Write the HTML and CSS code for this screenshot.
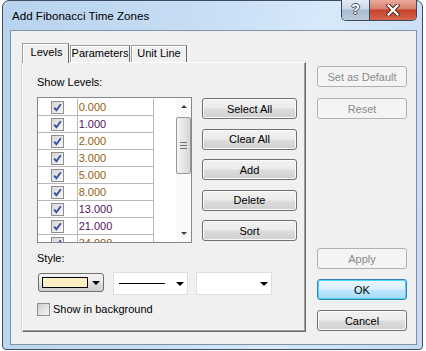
FILE: index.html
```html
<!DOCTYPE html>
<html>
   <head>
      <title>Add Fibonacci Time Zones</title>
      <meta charset="utf-8">
      <link rel="stylesheet" href="styles.css">
   </head>
   <body>
      <div class="window">
         <div class="titlebar">
            <span class="title">Add Fibonacci Time Zones</span>
            <div class="caption-btns">
               <span class="cap-help">?</span>
               <span class="cap-close">
                  <svg width="14" height="12" viewBox="0 0 14 12">
                     <path d="M2.5 1.5 L11.5 10.5 M11.5 1.5 L2.5 10.5" stroke="#5a2a22" stroke-width="4.2" stroke-linecap="square" fill="none"/>
                     <path d="M2.5 1.5 L11.5 10.5 M11.5 1.5 L2.5 10.5" stroke="#ffffff" stroke-width="2.2" stroke-linecap="square" fill="none"/>
                  </svg>
               </span>
            </div>
         </div>

         <div class="client">
            <div class="tabctl">
               <div class="tabs">
                  <span class="tab active">Levels</span>
                  <span class="tab">Parameters</span>
                  <span class="tab">Unit Line</span>
               </div>
               <div class="panel">
                  <div class="lbl">Show Levels:</div>
                  <div class="levels-row">
                     <div class="list">
                        <div class="rows" id="rows"></div>
                        <div class="gap-col"></div>
                        <div class="vscroll">
                           <div class="sb-btn"><span class="arr-up"></span></div>
                           <div class="thumb"><span class="grip"></span></div>
                           <div class="sb-fill"></div>
                           <div class="sb-btn"><span class="arr-down"></span></div>
                        </div>
                     </div>
                     <div class="list-btns">
                        <button class="btn">Select All</button>
                        <button class="btn">Clear All</button>
                        <button class="btn">Add</button>
                        <button class="btn">Delete</button>
                        <button class="btn">Sort</button>
                     </div>
                  </div>

                  <div class="lbl style-lbl">Style:</div>
                  <div class="style-row">
                     <div class="colorpick">
                        <span class="swatch"></span>
                        <span class="arr-down dark"></span>
                     </div>
                     <div class="combo">
                        <span class="line-sample"></span>
                        <span class="arr-down dark"></span>
                     </div>
                     <div class="combo wide">
                        <span class="arr-down dark"></span>
                     </div>
                  </div>

                  <div class="chk-row">
                     <span class="cb empty"></span>
                     <span>Show in background</span>
                  </div>
               </div>
            </div>

            <div class="side">
               <button class="btn off">Set as Default</button>
               <button class="btn off">Reset</button>
               <div class="side-fill"></div>
               <button class="btn off">Apply</button>
               <button class="btn default">OK</button>
               <button class="btn">Cancel</button>
            </div>
         </div>
      </div>

      <script>
         // fibonacci levels shown in the list, with their line colours
         let levels = [
            ["0.000", "gold"], ["1.000", "plum"], ["2.000", "gold"],
            ["3.000", "gold"], ["5.000", "gold"], ["8.000", "gold"],
            ["13.000", "plum"], ["21.000", "plum"], ["34.000", "gold"]
         ];

         let check = '<svg width="11" height="11" viewBox="0 0 11 11">' +
            '<path d="M2.2 5.6 L4.4 8.2 L8.8 2.2" stroke="#3550a0" stroke-width="1.9" fill="none"/></svg>';

         let html = "";
         for (let i = 0; i < levels.length; i++) {
            html += '<div class="row"><span class="c-chk"><span class="cb">' + check +
               '</span></span><span class="c-val ' + levels[i][1] + '">' + levels[i][0] + '</span></div>';
         }
         document.getElementById("rows").innerHTML = html;
      </script>
   </body>
</html>
```

FILE: styles.css
```css
body {
   margin: 0;
   background: #ffffff;
   font-family: "Liberation Sans", Arial, sans-serif;
   font-size: 11px;
   color: #000000;
}

button {
   font-family: inherit;
   font-size: 11px;
   font-weight: normal;
   color: #000000;
   padding: 0;
}

/* window frame */

.window {
   margin-left: 2px;
   width: 421px;
   height: 350px;
   box-sizing: border-box;
   border: 1px solid #3f4c5d;
   border-radius: 7px 7px 4px 4px;
   padding: 0 5px 4px 7px;
   background: linear-gradient(100deg, #b8d3ee 0%, #c6ddf4 40%, #d8e9fa 68%, #c4dbf2 100%);
   display: flex;
   flex-direction: column;
}

.titlebar {
   height: 29px;
   display: flex;
   align-items: flex-start;
}

.title {
   padding: 8px 0 0 2px;
   line-height: 13px;
   font-size: 11.6px;
}

.caption-btns {
   margin-left: auto;
   margin-top: -1px;
   height: 20px;
   display: flex;
   border: 1px solid #3a4859;
   border-top: 0;
   border-radius: 0 0 5px 5px;
   overflow: hidden;
}

.cap-help {
   width: 27px;
   border-right: 1px solid #3a4859;
   background: linear-gradient(#e2ebf4 0%, #cbd8e6 45%, #a9bbd0 50%, #bccbdb 100%);
   color: #ffffff;
   font-weight: bold;
   font-size: 14px;
   line-height: 19px;
   text-align: center;
   text-shadow: -1px 0 #47566b, 1px 0 #47566b, 0 -1px #47566b, 0 1px #47566b;
}

.cap-close {
   width: 46px;
   display: flex;
   align-items: center;
   justify-content: center;
   background: linear-gradient(#e9a99a 0%, #d7806b 45%, #c4412a 50%, #d4664c 100%);
}

/* client area */

.client {
   flex: 1;
   border: 1px solid #7f92a8;
   background: #f0f0f0;
   display: flex;
   padding: 12px 9px 12px 11px;
}

.tabctl {
   width: 284px;
   display: flex;
   flex-direction: column;
}

.tabs {
   height: 19px;
   display: flex;
   align-items: flex-end;
}

.tab {
   height: 17px;
   box-sizing: border-box;
   border: 1px solid #a0a0a0;
   border-bottom: 0;
   border-right-color: #696969;
   box-shadow: inset 1px 1px 0 #ffffff;
   background: #f0f0f0;
   text-align: center;
   line-height: 15px;
   margin-left: 1px;
   width: 60px;
}

.tab:last-child {
   width: 56px;
}

.tab.active {
   margin-left: 0;
   width: 47px;
   height: 20px;
   margin-bottom: -1px;
   line-height: 16px;
   padding-left: 2px;
   position: relative;
   z-index: 1;
}

.panel {
   flex: 1;
   border: 1px solid;
   border-color: #ffffff #696969 #696969 #ffffff;
   box-shadow: inset -1px -1px 0 #a0a0a0, -1px 0 0 #d8d8d8;
   padding: 13px 0 0 14px;
}

.lbl {
   line-height: 13px;
}

.levels-row {
   display: flex;
   margin-top: 8px;
}

/* levels list */

.list {
   width: 155px;
   height: 146px;
   box-sizing: border-box;
   border: 1px solid #828790;
   background: #ffffff;
   display: flex;
   overflow: hidden;
}

.rows {
   width: 116px;
   padding-top: 1px;
   overflow: hidden;
}

.row {
   display: flex;
   height: 17px;
   box-sizing: border-box;
   border-bottom: 1px solid #b9b9b9;
}

.c-chk {
   width: 39px;
   border-right: 1px solid #b9b9b9;
   display: flex;
   align-items: center;
   justify-content: center;
}

.c-val {
   width: 75px;
   border-right: 1px solid #b9b9b9;
   padding-left: 1px;
   line-height: 16px;
}

.gold {
   color: #95600f;
}

.plum {
   color: #55125e;
}

.gap-col {
   width: 22px;
}

.cb {
   width: 13px;
   height: 13px;
   box-sizing: border-box;
   border: 1px solid #8f8f8f;
   background: linear-gradient(135deg, #d6d6d6, #f8f8f8);
   display: flex;
   align-items: center;
   justify-content: center;
}

.cb svg {
   display: block;
}

.vscroll {
   width: 15px;
   display: flex;
   flex-direction: column;
   background: #fafafa;
}

.sb-btn {
   height: 17px;
   display: flex;
   align-items: center;
   justify-content: center;
}

.thumb {
   height: 57px;
   margin-top: 2px;
   box-sizing: border-box;
   border: 1px solid #979797;
   border-radius: 2px;
   background: linear-gradient(to right, #f4f4f4, #e6e6e6 50%, #d6d6d6);
   display: flex;
   align-items: center;
   justify-content: center;
}

.grip {
   width: 7px;
   height: 5px;
   border-top: 1px solid #707070;
   border-bottom: 1px solid #707070;
   background: linear-gradient(transparent 2px, #707070 2px, #707070 3px, transparent 3px);
}

.sb-fill {
   flex: 1;
}

.arr-up {
   width: 0;
   height: 0;
   border-left: 3px solid transparent;
   border-right: 3px solid transparent;
   border-bottom: 3px solid #404040;
}

.arr-down {
   width: 0;
   height: 0;
   border-left: 3px solid transparent;
   border-right: 3px solid transparent;
   border-top: 3px solid #404040;
}

.arr-down.dark {
   border-left-width: 4px;
   border-right-width: 4px;
   border-top: 4px solid #000000;
}

/* push buttons */

.btn {
   height: 21px;
   box-sizing: border-box;
   border: 1px solid #707070;
   border-radius: 3px;
   background: linear-gradient(#f2f2f2 0%, #ebebeb 48%, #dddddd 52%, #cfcfcf 100%);
   box-shadow: inset 0 0 0 1px #fbfbfb;
}

.btn.off {
   border-color: #adb2b5;
   background: #f4f4f4;
   color: #8a8a8a;
   box-shadow: none;
}

.btn.default {
   border-color: #3c7fb1;
   background: linear-gradient(#eaf6fd 0%, #d9f0fc 48%, #bee6fd 52%, #a7d9f5 100%);
   box-shadow: inset 0 0 0 1px #48d7fb;
}

.list-btns {
   margin-left: 10px;
   margin-top: 1px;
   display: flex;
   flex-direction: column;
   gap: 9.5px;
}

.list-btns .btn {
   width: 95px;
}

.side {
   width: 90px;
   margin-left: 11px;
   margin-top: 23px;
   margin-bottom: 1px;
   display: flex;
   flex-direction: column;
   gap: 10px;
}

.side .btn:nth-child(2) {
   margin-top: 1px;
}

.side-fill {
   flex: 1;
}

/* style row */

.style-lbl {
   margin-top: 9px;
}

.style-row {
   display: flex;
   align-items: flex-start;
   margin-top: 7px;
}

.colorpick {
   width: 66px;
   height: 19px;
   margin-left: 1px;
   margin-top: 1px;
   box-sizing: border-box;
   border: 1px solid #707070;
   border-radius: 3px;
   background: linear-gradient(#f2f2f2 0%, #ebebeb 48%, #dddddd 52%, #cfcfcf 100%);
   display: flex;
   align-items: center;
   padding-left: 3px;
   gap: 4px;
}

.swatch {
   width: 46px;
   height: 11px;
   box-sizing: border-box;
   border: 1px solid #000000;
   background: #fbeec2;
}

.combo {
   width: 75px;
   height: 23px;
   margin-left: 9px;
   box-sizing: border-box;
   border: 1px solid #dedede;
   background: #ffffff;
   display: flex;
   align-items: center;
   justify-content: flex-end;
   padding-right: 3px;
}

.combo.wide {
   width: 76px;
   margin-left: 8px;
}

.line-sample {
   width: 46px;
   height: 1px;
   background: #000000;
   margin-right: 11px;
}

.chk-row {
   display: flex;
   align-items: center;
   gap: 3px;
   margin-top: 8px;
   line-height: 13px;
}

.cb.empty {
   background: linear-gradient(135deg, #cfcfcf, #f6f6f6);
}
```
